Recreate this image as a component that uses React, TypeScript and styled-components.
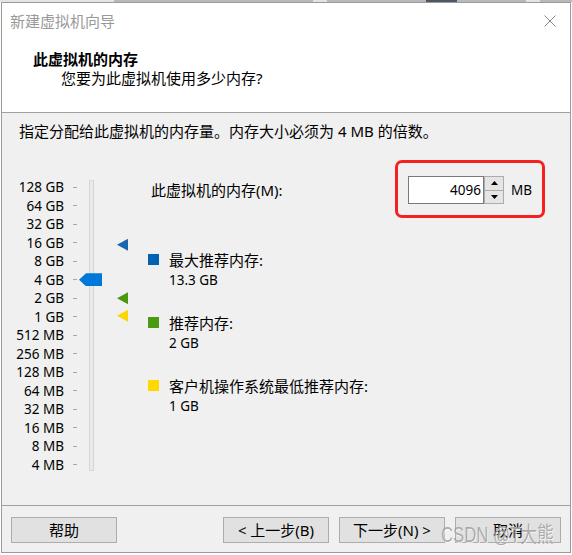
import styled, { createGlobalStyle } from 'styled-components'

const UI_FONT = `"Segoe UI", "Noto Sans", "Noto Sans CJK SC", sans-serif`

const GlobalStyle = createGlobalStyle`
  html, body { margin: 0; padding: 0; }
  body {
    width: 572px;
    height: 555px;
    overflow: hidden;
    background:
      linear-gradient(to right,
        #e4e4e4 0 114px, #b9b9b9 114px 313px, #e2e2e2 313px 327px, #b9b9b9 327px 426px,
        #4b5865 426px 457px, #b9b9b9 457px 526px, #e4e4e4 526px 540px, #b9b9b9 540px) top left / 100% 2px no-repeat,
      #ffffff;
    font-family: ${UI_FONT};
  }
`

const SIZES = [
  '128 GB', '64 GB', '32 GB', '16 GB', '8 GB', '4 GB', '2 GB', '1 GB',
  '512 MB', '256 MB', '128 MB', '64 MB', '32 MB', '16 MB', '8 MB', '4 MB',
]

const MARKERS = [
  { row: 4, color: '#1a64b0', shift: 2 },
  { row: 7, color: '#4a9712', shift: 0 },
  { row: 8, color: '#fcd600', shift: -1 },
]

const LEGEND = [
  { color: '#0063b1', label: '最大推荐内存:', value: '13.3 GB' },
  { color: '#4a9a13', label: '推荐内存:', value: '2 GB' },
  { color: '#ffd800', label: '客户机操作系统最低推荐内存:', value: '1 GB' },
]

const Window = styled.div`
  position: relative;
  box-sizing: border-box;
  width: 570px;
  height: 551px;
  margin: 2px 0 0 1px;
  border: 1px solid #9a9a9a;
  background: #f0f0f0;
  display: flex;
  flex-direction: column;
  font-size: 15px;
  color: #000;
`

const TitleBar = styled.div`
  height: 36px;
  flex-shrink: 0;
  display: flex;
  align-items: center;
  justify-content: space-between;
  padding: 0 14px 0 8px;
  background: #fff;
`

const WindowTitle = styled.span`
  color: #999;
  line-height: 18px;
`

const Header = styled.div`
  height: 73px;
  flex-shrink: 0;
  box-sizing: content-box;
  padding: 11px 0 0 31px;
  box-sizing: border-box;
  height: 74px;
  background: #fff;
  border-bottom: 1px solid #a0a0a0;
`

const HeaderTitle = styled.div`
  font-weight: bold;
  line-height: 18px;
`

const HeaderSubtitle = styled.div`
  margin-top: 1px;
  padding-left: 28px;
  line-height: 18px;
`

const Body = styled.div`
  flex: 1;
  padding-top: 9px;
`

const Intro = styled.div`
  padding-left: 17px;
  line-height: 18px;
`

const Main = styled.div`
  display: flex;
  align-items: flex-start;
  margin-top: 36px;
`

const Slider = styled.div`
  display: grid;
  grid-template-columns: 62px 15px 24px 25px;
  grid-template-rows: repeat(16, 18.5px);
  margin-top: 2px;
`

const SizeLabel = styled.div<{ $row: number }>`
  grid-column: 1;
  grid-row: ${p => p.$row};
  text-align: right;
  font-size: 13.5px;
  line-height: 18.5px;
  white-space: nowrap;
`

const Tick = styled.div<{ $row: number }>`
  grid-column: 2;
  grid-row: ${p => p.$row};
  align-self: center;
  width: 4px;
  height: 1px;
  margin-left: 9px;
  background: #a8a8a8;
`

const Track = styled.div`
  grid-column: 3;
  grid-row: 1 / -1;
  justify-self: center;
  box-sizing: border-box;
  width: 5px;
  margin: 2px 0 3px;
  border: 1px solid #d6d6d6;
  background: #e8ebea;
`

const Thumb = styled.div<{ $row: number }>`
  grid-column: 3;
  grid-row: ${p => p.$row};
  align-self: center;
  width: 23px;
  height: 13px;
  background: #0078d7;
  clip-path: polygon(0 50%, 7px 0, 100% 0, 100% 100%, 7px 100%);
`

const Marker = styled.div<{ $row: number; $color: string; $shift: number }>`
  grid-column: 4;
  grid-row: ${p => p.$row};
  align-self: center;
  justify-self: end;
  width: 11px;
  height: 12px;
  background: ${p => p.$color};
  clip-path: polygon(0 50%, 100% 0, 100% 100%);
  transform: translateY(${p => p.$shift}px);
`

const Side = styled.div`
  margin-left: 20px;
  display: flex;
  flex-direction: column;
`

const MemoryRow = styled.div`
  position: relative;
  display: flex;
  align-items: center;
  height: 28px;
`

const FieldLabel = styled.span`
  box-sizing: border-box;
  width: 260px;
  padding-left: 3px;
  line-height: 18px;
`

const NumberInput = styled.input`
  box-sizing: border-box;
  width: 76px;
  height: 28px;
  margin: 0;
  padding: 0 2px 0 0;
  border: 1px solid #7a7a7a;
  background: #fff;
  text-align: right;
  font-family: ${UI_FONT};
  font-size: 13.5px;
  color: #000;
  outline: none;
`

const SpinButtons = styled.div`
  display: flex;
  flex-direction: column;
  width: 20px;
  height: 28px;
`

const SpinButton = styled.div`
  flex: 1;
  display: flex;
  align-items: center;
  justify-content: center;
  box-sizing: border-box;
  border: 1px solid #acacac;
  background: #e5e5e5;
  & + & { margin-top: -1px; }
`

const Unit = styled.span`
  margin-left: 7px;
  font-size: 13.5px;
  line-height: 18px;
`

const Highlight = styled.div`
  position: absolute;
  left: 247px;
  top: -16px;
  width: 150px;
  height: 58px;
  box-sizing: border-box;
  border: 3px solid #f52121;
  border-radius: 7px;
  pointer-events: none;
`

const Legend = styled.div`
  display: flex;
  flex-direction: column;
  gap: 23px;
  margin-top: 46px;
`

const LegendItem = styled.div`
  display: grid;
  grid-template-columns: 11px auto;
  column-gap: 10px;
  line-height: 20px;
`

const Swatch = styled.div<{ $color: string }>`
  width: 11px;
  height: 11px;
  margin-top: 4px;
  background: ${p => p.$color};
`

const LegendValue = styled.div`
  grid-column: 2;
  font-size: 13.5px;
`

const Footer = styled.div`
  height: 47px;
  flex-shrink: 0;
  box-sizing: border-box;
  display: flex;
  justify-content: space-between;
  padding: 11px 9px 0;
  border-top: 1px solid #a0a0a0;
`

const ButtonGroup = styled.div`
  display: flex;
  gap: 10px;
`

const Button = styled.button`
  box-sizing: border-box;
  width: 106px;
  height: 26px;
  margin: 0;
  padding: 0;
  border: 1px solid #adadad;
  background: #e1e1e1;
  font-family: ${UI_FONT};
  font-size: 15px;
  line-height: 18px;
  color: #000;
`

const Watermark = styled.div`
  position: absolute;
  left: 439px;
  top: 521px;
  font-family: "Liberation Sans", "Noto Sans CJK SC", sans-serif;
  font-size: 22px;
  line-height: 22px;
  white-space: nowrap;
  color: rgba(150, 150, 150, 0.75);
  text-shadow: 1px 1px 0 rgba(255, 255, 255, 0.7);
  transform: scaleX(0.76);
  transform-origin: left center;
  pointer-events: none;
`

function CloseIcon() {
  return (
    <svg width="12" height="12" viewBox="0 0 12 12">
      <path d="M0.5 0.5 L11.5 11.5 M11.5 0.5 L0.5 11.5" stroke="#8a8a8a" strokeWidth="1" />
    </svg>
  )
}

function Arrow({ up }: { up?: boolean }) {
  return (
    <svg width="7" height="4" viewBox="0 0 7 4">
      <path d={up ? 'M0 4 L3.5 0 L7 4 Z' : 'M0 0 L3.5 4 L7 0 Z'} fill="#000" />
    </svg>
  )
}

export default function App() {
  return (
    <>
      <GlobalStyle />
      <Window>
        <TitleBar>
          <WindowTitle>新建虚拟机向导</WindowTitle>
          <CloseIcon />
        </TitleBar>

        <Header>
          <HeaderTitle>此虚拟机的内存</HeaderTitle>
          <HeaderSubtitle>您要为此虚拟机使用多少内存?</HeaderSubtitle>
        </Header>

        <Body>
          <Intro>指定分配给此虚拟机的内存量。内存大小必须为 4 MB 的倍数。</Intro>
          <Main>
            <Slider>
              {SIZES.map((s, i) => (
                <SizeLabel key={s} $row={i + 1}>{s}</SizeLabel>
              ))}
              {SIZES.map((s, i) => (
                <Tick key={s} $row={i + 1} />
              ))}
              <Track />
              <Thumb $row={6} />
              {MARKERS.map(m => (
                <Marker key={m.row} $row={m.row} $color={m.color} $shift={m.shift} />
              ))}
            </Slider>

            <Side>
              <MemoryRow>
                <FieldLabel>此虚拟机的内存(M):</FieldLabel>
                <NumberInput readOnly value="4096" />
                <SpinButtons>
                  <SpinButton><Arrow up /></SpinButton>
                  <SpinButton><Arrow /></SpinButton>
                </SpinButtons>
                <Unit>MB</Unit>
                <Highlight />
              </MemoryRow>

              <Legend>
                {LEGEND.map(l => (
                  <LegendItem key={l.label}>
                    <Swatch $color={l.color} />
                    <div>{l.label}</div>
                    <LegendValue>{l.value}</LegendValue>
                  </LegendItem>
                ))}
              </Legend>
            </Side>
          </Main>
        </Body>

        <Footer>
          <Button>帮助</Button>
          <ButtonGroup>
            <Button>&lt; 上一步(B)</Button>
            <Button>下一步(N) &gt;</Button>
            <Button>取消</Button>
          </ButtonGroup>
        </Footer>

        <Watermark>CSDN @T大熊</Watermark>
      </Window>
    </>
  )
}
